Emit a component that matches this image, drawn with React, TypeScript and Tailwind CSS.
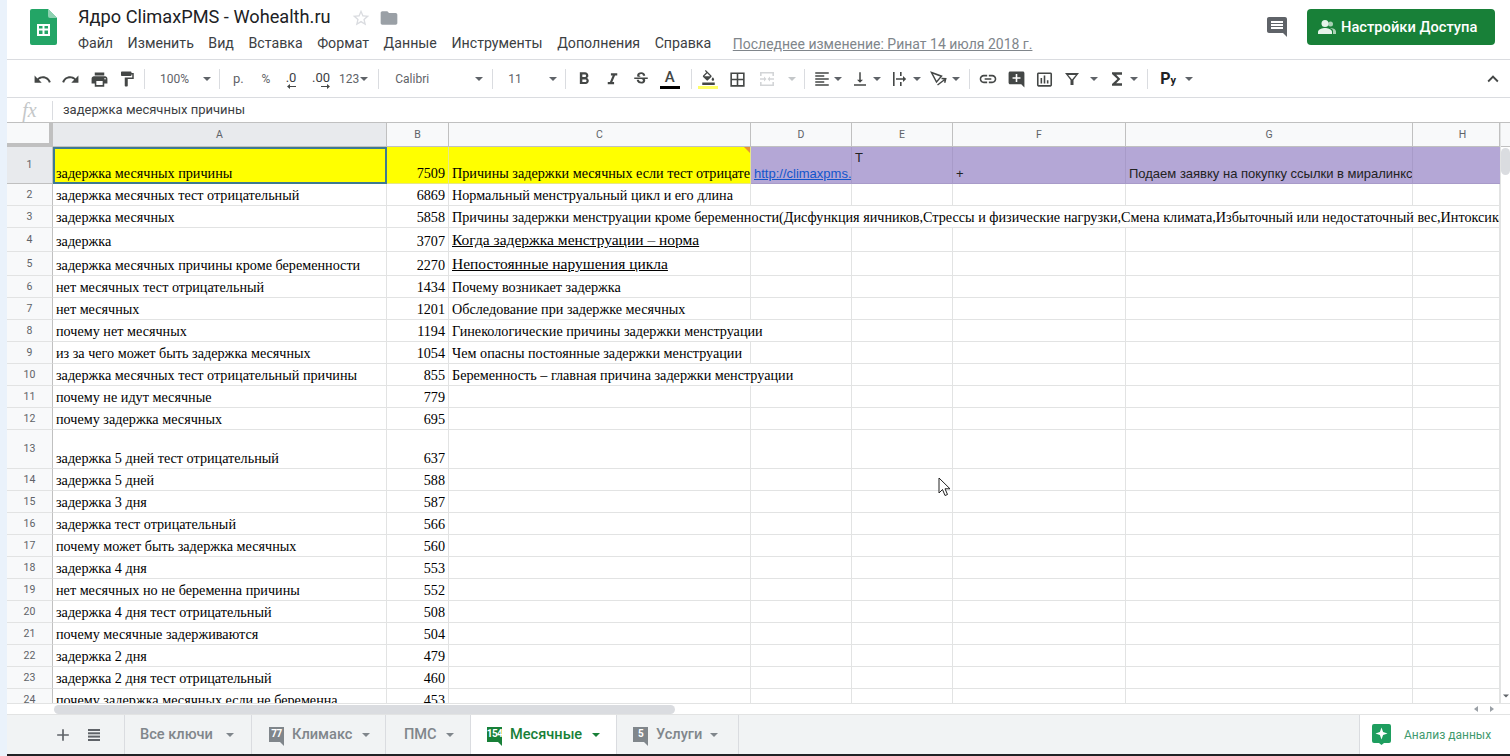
import React from 'react';
import {
  MdUndo, MdRedo, MdPrint, MdFormatPaint, MdFormatBold, MdFormatItalic, MdStrikethroughS,
  MdBorderAll, MdFormatAlignLeft, MdVerticalAlignBottom, MdLink, MdAddComment, MdInsertChartOutlined,
  MdFunctions, MdComment, MdKeyboardArrowUp, MdStarBorder, MdFolder, MdAdd,
  MdFormatColorFill,
} from 'react-icons/md';

const cols = 'grid grid-cols-[46px_334px_62px_302px_101px_101px_173px_287px_87px]';
const line = 'border-r border-b border-[#e2e3e3]';

type R = { n: number; a: string; b: string; c?: string; h?: string; span?: string; big?: boolean };
const rows: R[] = [
  { n: 2, a: 'задержка месячных тест отрицательный', b: '6869', c: 'Нормальный менструальный цикл и его длина', h: 'h-[22px]' },
  { n: 3, a: 'задержка месячных', b: '5858', c: 'Причины задержки менструации кроме беременности(Дисфункция яичников,Стрессы и физические нагрузки,Смена климата,Избыточный или недостаточный вес,Интоксикация организма', h: 'h-[22px]', span: 'col-span-6' },
  { n: 4, a: 'задержка', b: '3707', c: 'Когда задержка менструации – норма', h: 'h-[24px]', big: true },
  { n: 5, a: 'задержка месячных причины кроме беременности', b: '2270', c: 'Непостоянные нарушения цикла', h: 'h-[24px]', big: true },
  { n: 6, a: 'нет месячных тест отрицательный', b: '1434', c: 'Почему возникает задержка' },
  { n: 7, a: 'нет месячных', b: '1201', c: 'Обследование при задержке месячных' },
  { n: 8, a: 'почему нет месячных', b: '1194', c: 'Гинекологические причины задержки менструации', span: 'col-span-2' },
  { n: 9, a: 'из за чего может быть задержка месячных', b: '1054', c: 'Чем опасны постоянные задержки менструации' },
  { n: 10, a: 'задержка месячных тест отрицательный причины', b: '855', c: 'Беременность – главная причина задержки менструации', span: 'col-span-2' },
  { n: 11, a: 'почему не идут месячные', b: '779' },
  { n: 12, a: 'почему задержка месячных', b: '695' },
  { n: 13, a: 'задержка 5 дней тест отрицательный', b: '637', h: 'h-[39px]' },
  { n: 14, a: 'задержка 5 дней', b: '588' },
  { n: 15, a: 'задержка 3 дня', b: '587' },
  { n: 16, a: 'задержка тест отрицательный', b: '566' },
  { n: 17, a: 'почему может быть задержка месячных', b: '560' },
  { n: 18, a: 'задержка 4 дня', b: '553' },
  { n: 19, a: 'нет месячных но не беременна причины', b: '552' },
  { n: 20, a: 'задержка 4 дня тест отрицательный', b: '508' },
  { n: 21, a: 'почему месячные задерживаются', b: '504' },
  { n: 22, a: 'задержка 2 дня', b: '479' },
  { n: 23, a: 'задержка 2 дня тест отрицательный', b: '460' },
  { n: 24, a: 'почему задержка месячных если не беременна', b: '453' },
];

const serif = "[font-family:'Liberation_Serif',serif] text-[14.2px] text-black";
const arial = "[font-family:'Liberation_Sans',Arial,sans-serif] text-[13px] text-[#222]";

function Sep({ className = '' }: { className?: string }) {
  return <div className={`w-px h-[20px] bg-[#dadce0] ${className}`} />;
}
function Caret({ className = '', light = false }: { className?: string; light?: boolean }) {
  return <span className={`w-0 h-0 border-x-[4px] border-x-transparent border-t-[4px] ${light ? 'border-t-[#c4c7c9]' : 'border-t-[#5f6368]'} ${className}`} />;
}
function Btn({ w, children, className = '' }: { w: string; children: React.ReactNode; className?: string }) {
  return <div className={`flex items-center justify-center shrink-0 text-[#444746] ${w} ${className}`}>{children}</div>;
}

function SheetsLogo() {
  return (
    <svg width="27" height="36" viewBox="0 0 27 36" className="shrink-0">
      <path d="M2 0h16l9 9v25a2 2 0 0 1-2 2H2a2 2 0 0 1-2-2V2a2 2 0 0 1 2-2z" fill="#23a566" />
      <path d="M18 0l9 9h-7a2 2 0 0 1-2-2z" fill="#8ed1b1" />
      <path d="M7 15h13v12H7zM9 17v2.5h3.5V17zM14.500 17v2.500H18V17zM9 21.500V25h3.500v-3.500zM14.500 21.500V25H18v-3.500z" fill="#fff" fillRule="evenodd" />
    </svg>
  );
}

function MergeIcon() {
  return (
    <svg width="18" height="18" viewBox="0 0 18 18" fill="#d3d5d7">
      <path d="M2 2h14v4h-1.600V3.600H3.600V6H2zM2 12h1.600v2.400h10.800V12H16v4H2zM2 8.200h4V6.500L8.500 9 6 11.500V9.800H2zM16 8.200h-4V6.500L9.500 9l2.500 2.500V9.800h4z" />
    </svg>
  );
}
function WrapIcon() {
  return (
    <svg width="18" height="18" viewBox="0 0 18 18" fill="#444746">
      <rect x="2" y="2" width="1.600" height="14" />
      <rect x="9" y="2" width="1.600" height="4" />
      <rect x="9" y="12" width="1.600" height="4" />
      <path d="M5 8.300h7V6l3.200 3-3.200 3V9.700H5z" />
    </svg>
  );
}
function RotateIcon() {
  return (
    <svg width="18" height="18" viewBox="0 0 18 18" fill="none" stroke="#444746" strokeWidth="1.500">
      <path d="M1.500 2.500l10 3.700L6.500 12z" />
      <path d="M7.500 15l8-6M11.500 8.500l4.200.2-1 4" />
    </svg>
  );
}
function FilterIcon() {
  return (
    <svg width="16" height="16" viewBox="0 0 16 16" fill="#444746">
      <path d="M1 2h14L9.500 9v5h-3V9z" />
      <path d="M4.200 4l3.800 4.600L11.800 4z" fill="#fff" />
    </svg>
  );
}

function Badge({ n, color }: { n: string; color: string }) {
  return (
    <div className="flex flex-col items-end shrink-0 mr-[8px] mt-[3px]">
      <div className={`w-[15px] h-[15px] flex items-center justify-center overflow-hidden text-white text-[10px] font-bold leading-none tracking-[-0.5px] ${color}`}>{n}</div>
      <div className={`w-0 h-0 border-l-[4px] border-l-transparent border-t-[4px] ${color === 'bg-[#188038]' ? 'border-t-[#188038]' : 'border-t-[#80868b]'}`} />
    </div>
  );
}

function Tab({ w, label, pl, badge, active, caretMl }: { w: string; label: string; pl: string; badge?: string; active?: boolean; caretMl: string }) {
  return (
    <div className={`flex items-center h-full border-r border-[#dadce0] shrink-0 ${w} ${pl} ${active ? 'bg-white text-[#188038]' : 'text-[#80868b]'}`}>
      {badge && <Badge n={badge} color={active ? 'bg-[#188038]' : 'bg-[#80868b]'} />}
      <span className="text-[14.600px] font-medium">{label}</span>
      <Caret className={`${caretMl} ${active ? 'border-t-[#188038]!' : 'border-t-[#80868b]!'}`} />
    </div>
  );
}

export default function App() {
  return (
    <div className="relative flex w-[1510px] h-[756px] overflow-hidden bg-white [font-family:Roboto,'Liberation_Sans',sans-serif]">
      <div className="w-[7px] shrink-0 bg-[#eaf2fb]" />
      <div className="flex flex-col flex-1 min-w-0">
        {/* Title bar */}
        <div className="flex h-[60px] shrink-0 border-b border-[#dadce0]">
          <div className="pl-[23px] pt-[9px] w-[71px] shrink-0"><SheetsLogo /></div>
          <div className="flex flex-col flex-1 pt-[5px]">
            <div className="flex items-center h-[25px]">
              <span className="text-[18.200px] leading-none text-[#202124]">Ядро ClimaxPMS - Wohealth.ru</span>
              <MdStarBorder className="ml-[20px] text-[#dadce0]" size={20} />
              <MdFolder className="ml-[8px] text-[#9aa0a6]" size={20} />
            </div>
            <div className="flex items-center h-[26px] mt-[1px] text-[14.200px] text-[#3c4043] gap-[14.500px]">
              <span>Файл</span><span>Изменить</span><span>Вид</span><span>Вставка</span><span>Формат</span><span>Данные</span><span>Инструменты</span><span>Дополнения</span><span>Справка</span>
              <span className="ml-[7px] text-[14px] underline text-[#80868b]">Последнее изменение: Ринат 14 июля 2018 г.</span>
            </div>
          </div>
          <div className="flex items-start pt-[9px] pr-[15px]">
            <MdComment className="text-[#5f6368] mr-[18px] mt-[6px]" size={24} />
            <div className="flex items-center w-[188px] h-[36px] rounded-[4px] bg-[#188038] text-white pl-[11px]">
              <svg width="18" height="14" viewBox="0 0 18 14" fill="#e6f4ea" className="mr-[5px]">
                <circle cx="7" cy="3.500" r="3.500" />
                <path d="M0 12c0-2.700 4.500-4 7-4s7 1.300 7 4v2H0z" />
                <circle cx="12.500" cy="4" r="2.500" opacity=".7" />
                <path d="M12 8c2.500 0 6 1 6 3.500V14h-3v-3c0-1.200-1-2.200-3-3z" opacity=".7" />
              </svg>
              <span className="text-[14.700px] font-medium whitespace-nowrap">Настройки Доступа</span>
            </div>
          </div>
        </div>

        {/* Toolbar */}
        <div className="flex items-center h-[38px] shrink-0 border-b border-[#dadce0] pl-[21px] pt-[1px] text-[12px] text-[#5f6368]">
          <Btn w="w-[28px]"><MdUndo size={19} /></Btn>
          <Btn w="w-[29px]"><MdRedo size={19} /></Btn>
          <Btn w="w-[28px]"><MdPrint size={19} /></Btn>
          <Btn w="w-[28px]"><MdFormatPaint size={18} /></Btn>
          <Sep className="ml-[3px]" />
          <span className="ml-[15px] w-[30px]">100%</span>
          <Caret className="ml-[13px]" />
          <Sep className="ml-[8px]" />
          <span className="ml-[13px] w-[16px] text-[13px]">р.</span>
          <span className="ml-[6px] w-[22px] text-center">%</span>
          <Btn w="w-[24px]" className="ml-[2px]">
            <span className="flex flex-col items-end pt-[3px] leading-[12px] text-[13px] text-[#3c4043]">.0<svg width="9" height="5" viewBox="0 0 9 5" fill="#444746"><path d="M0 2.500L3 0v2h6v1H3v2z" /></svg></span>
          </Btn>
          <Btn w="w-[30px]" className="ml-[3px]">
            <span className="flex flex-col items-end pt-[3px] leading-[12px] text-[13px] text-[#3c4043]">.00<svg width="9" height="5" viewBox="0 0 9 5" fill="#444746"><path d="M9 2.500L6 0v2H0v1h6v2z" /></svg></span>
          </Btn>
          <span className="ml-[3px]">123</span>
          <Caret className="ml-[1px]" />
          <Sep className="ml-[10px]" />
          <span className="ml-[16px] w-[76px]">Calibri</span>
          <Caret className="ml-[4px]" />
          <Sep className="ml-[9px]" />
          <span className="ml-[15px] w-[16px]">11</span>
          <Caret className="ml-[25px]" />
          <Sep className="ml-[8px]" />
          <Btn w="w-[28px]" className="ml-[4px]"><MdFormatBold size={20} /></Btn>
          <Btn w="w-[29px]"><MdFormatItalic size={19} /></Btn>
          <Btn w="w-[28px]"><MdStrikethroughS size={18} /></Btn>
          <Btn w="w-[29px]">
            <span className="flex flex-col items-center"><span className="text-[15px] leading-[15px] text-[#444746] font-medium">A</span><span className="w-[20px] h-[3px] mt-[1px] bg-black" /></span>
          </Btn>
          <Sep className="ml-[7px]" />
          <Btn w="w-[28px]" className="ml-[2px]">
            <span className="flex flex-col items-center"><MdFormatColorFill size={15} /><span className="w-[20px] h-[3px] mt-[1px] bg-[#ffff66]" /></span>
          </Btn>
          <Btn w="w-[31px]"><MdBorderAll size={19} /></Btn>
          <Btn w="w-[28px]"><MergeIcon /></Btn>
          <Caret className="ml-[7px]" light />
          <Sep className="ml-[8px]" />
          <Btn w="w-[24px]" className="ml-[5px]"><MdFormatAlignLeft size={18} /></Btn>
          <Caret className="ml-[0px]" />
          <Btn w="w-[24px]" className="ml-[6px]"><MdVerticalAlignBottom size={18} /></Btn>
          <Caret className="ml-[1px]" />
          <Btn w="w-[20px]" className="ml-[9px]"><WrapIcon /></Btn>
          <Caret className="ml-[3px]" />
          <Btn w="w-[22px]" className="ml-[7px]"><RotateIcon /></Btn>
          <Caret className="ml-[2px]" />
          <Sep className="ml-[9px]" />
          <Btn w="w-[28px]" className="ml-[4px]"><MdLink size={20} /></Btn>
          <Btn w="w-[28px]"><MdAddComment size={19} /></Btn>
          <Btn w="w-[28px]"><MdInsertChartOutlined size={19} /></Btn>
          <Btn w="w-[28px]"><FilterIcon /></Btn>
          <Caret className="ml-[4px]" />
          <Btn w="w-[24px]" className="ml-[7px]"><MdFunctions size={20} /></Btn>
          <Caret className="ml-[1px]" />
          <Sep className="ml-[9px]" />
          <span className="ml-[12px] text-[16px] font-bold text-[#202124] leading-none">Р<span className="text-[11px]">у</span></span>
          <Caret className="ml-[9px]" />
          <MdKeyboardArrowUp className="ml-auto mr-[6px] text-[#444746]" size={22} />
        </div>

        {/* Formula bar */}
        <div className="flex items-center h-[25px] shrink-0 border-b border-[#c0c0c0]">
          <span className="w-[45px] text-center text-[20px] text-[#c4c7c9] italic [font-family:'Liberation_Serif',serif]">fx</span>
          <div className="w-px h-[19px] bg-[#dadce0]" />
          <span className="ml-[10px] text-[13px] text-[#3c4043]">задержка месячных причины</span>
        </div>

        {/* Sheet */}
        <div className="flex flex-1 min-h-0">
          <div className="flex-1 min-w-0 h-full overflow-hidden">
            <div className={`${cols} h-[24px] text-[10.500px] text-[#5f6368]`}>
              <div className="bg-[#f8f9fa] border-r-[4px] border-b-[4px] border-[#c0c0c0]" />
              {['A', 'B', 'C', 'D', 'E', 'F', 'G', 'H'].map((c, i) => (
                <div key={c} className={`flex items-center justify-center border-r border-b border-[#c0c0c0] ${i === 0 ? 'bg-[#e8eaed]' : 'bg-[#f8f9fa]'} ${i === 7 ? 'pl-[13px]' : ''}`}>{c}</div>
              ))}
            </div>
            <div className={`${cols} h-[37px]`}>
              <div className="flex items-center justify-center text-[10.500px] text-[#5f6368] bg-[#e8eaed] border-r border-b border-[#c0c0c0]">1</div>
              <div className={`flex items-end px-[1px] leading-[17px] bg-[#ffff00] border-2 border-[#3f7a91] ${serif}`}>задержка месячных причины</div>
              <div className={`flex items-end justify-end px-[3px] leading-[19px] bg-[#ffff00] border-r border-b border-[#e6e68a] ${serif}`}>7509</div>
              <div className={`relative flex items-end overflow-hidden whitespace-nowrap px-[3px] leading-[19px] bg-[#ffff00] border-r border-b border-[#e6e68a] ${serif}`}>
                Причины задержки месячных если тест отрицательный
                <span className="absolute top-0 right-0 w-0 h-0 border-l-[6px] border-l-transparent border-t-[6px] border-t-[#e69138]" />
              </div>
              <div className="flex items-end overflow-hidden whitespace-nowrap px-[3px] leading-[19px] bg-[#b4a7d6] border-r border-b border-[#a89bc9] [font-family:'Liberation_Sans',Arial,sans-serif] text-[13px] text-[#1155cc] underline">http://climaxpms.ru/zaderzhka</div>
              <div className={`flex items-start px-[3px] pt-[1px] bg-[#b4a7d6] border-r border-b border-[#a89bc9] ${arial}`}>Т</div>
              <div className={`flex items-end px-[3px] leading-[19px] bg-[#b4a7d6] border-r border-b border-[#a89bc9] ${arial}`}>+</div>
              <div className={`flex items-end overflow-hidden whitespace-nowrap px-[3px] leading-[19px] bg-[#b4a7d6] border-r border-b border-[#a89bc9] ${arial}`}>Подаем заявку на покупку ссылки в миралинкс</div>
              <div className="bg-[#b4a7d6] border-b border-[#a89bc9]" />
            </div>
            {rows.map((r) => {
              const taken = r.span === 'col-span-6' ? 5 : r.span === 'col-span-2' ? 1 : 0;
              return (
                <div key={r.n} className={`${cols} ${r.h ?? 'h-[22px]'}`}>
                  <div className="flex items-center justify-center text-[10.500px] text-[#5f6368] bg-[#f8f9fa] border-r border-b border-r-[#c0c0c0] border-b-[#e2e3e3]">{r.n}</div>
                  <div className={`flex items-end overflow-hidden whitespace-nowrap px-[3px] leading-[19px] ${line} ${serif}`}>{r.a}</div>
                  <div className={`flex items-end justify-end px-[3px] leading-[19px] ${line} ${serif}`}>{r.b}</div>
                  <div className={`flex items-end overflow-hidden whitespace-nowrap px-[3px] ${r.big ? 'leading-[22px]' : 'leading-[19px]'} ${r.span ?? ''} ${line} ${serif} ${r.big ? 'text-[15.500px]! underline' : ''}`}>{r.c}</div>
                  {['d', 'e', 'f', 'g', 'h'].slice(taken).map((k) => <div key={k} className={line} />)}
                </div>
              );
            })}
          </div>
          {/* Vertical scrollbar */}
          <div className="flex flex-col w-[10px] shrink-0 bg-white border-l border-[#e2e3e3]">
            <div className="h-[24px] shrink-0 bg-[#f8f9fa] border-b border-[#c0c0c0]" />
            <div className="w-[9px] h-[27px] mt-[1px] rounded-[5px] bg-[#dadce0]" />
            <div className="flex-1" />
            <div className="flex justify-center pb-[5px]"><Caret className="scale-75" /></div>
          </div>
        </div>

        {/* Horizontal scrollbar */}
        <div className="flex items-center h-[11px] shrink-0 border-t border-[#e2e3e3] bg-white pl-[47px]">
          <div className="w-[621px] h-[9px] rounded-[5px] bg-[#dadce0]" />
          <div className="ml-auto mr-[16px] flex items-center gap-[12px]">
            <span className="w-0 h-0 border-y-[3px] border-y-transparent border-r-[4px] border-r-[#9aa0a6]" />
            <span className="w-0 h-0 border-y-[3px] border-y-transparent border-l-[4px] border-l-[#9aa0a6]" />
          </div>
        </div>

        {/* Tabs */}
        <div className="flex items-stretch h-[40px] shrink-0 bg-[#f1f3f4] border-t border-[#e2e3e3] text-[#5f6368]">
          <div className="flex items-center w-[118px] shrink-0 border-r border-[#dadce0]">
            <MdAdd size={20} className="ml-[46px]" />
            <svg width="12" height="12" viewBox="0 0 12 12" fill="#5f6368" className="ml-[15px]">
              <rect y="0" width="12" height="2" /><rect y="3.300" width="12" height="2" /><rect y="6.600" width="12" height="2" /><rect y="10" width="12" height="2" />
            </svg>
          </div>
          <Tab w="w-[127px]" pl="pl-[15px]" label="Все ключи" caretMl="ml-[13px]" />
          <Tab w="w-[134px]" pl="pl-[17px]" badge="77" label="Климакс" caretMl="ml-[9px]" />
          <Tab w="w-[85px]" pl="pl-[18px]" label="ПМС" caretMl="ml-[9px]" />
          <Tab w="w-[146px]" pl="pl-[16px]" badge="154" label="Месячные" caretMl="ml-[10px]" active />
          <Tab w="w-[122px]" pl="pl-[16px]" badge="5" label="Услуги" caretMl="ml-[8px]" />
          <div className="flex-1" />
          <div className="flex items-center w-[151px] shrink-0 bg-white border-l border-[#dadce0] pl-[12px]">
            <svg width="19" height="21" viewBox="0 0 19 21" className="shrink-0">
              <path d="M2 0h15a2 2 0 0 1 2 2v15a2 2 0 0 1-2 2h-5l-2.500 2L7 19H2a2 2 0 0 1-2-2V2a2 2 0 0 1 2-2z" fill="#1e9e5f" />
              <path d="M9.500 3.500l1.600 4.400 4.400 1.600-4.400 1.600-1.600 4.400-1.600-4.400-4.400-1.600 4.400-1.600z" fill="#fff" />
            </svg>
            <span className="ml-[13px] text-[12px] text-[#3f9a6e] whitespace-nowrap">Анализ данных</span>
          </div>
        </div>
        <div className="h-[2px] shrink-0 bg-[#202124]" />
      </div>

      {/* Mouse cursor */}
      <svg className="absolute left-[938px] top-[477px]" width="13" height="20" viewBox="0 0 13 20">
        <path d="M1 1v15l3.500-3.500L7 18.500l2.500-1L7 11.800h5z" fill="#fff" stroke="#222" strokeWidth="1" />
      </svg>
    </div>
  );
}
